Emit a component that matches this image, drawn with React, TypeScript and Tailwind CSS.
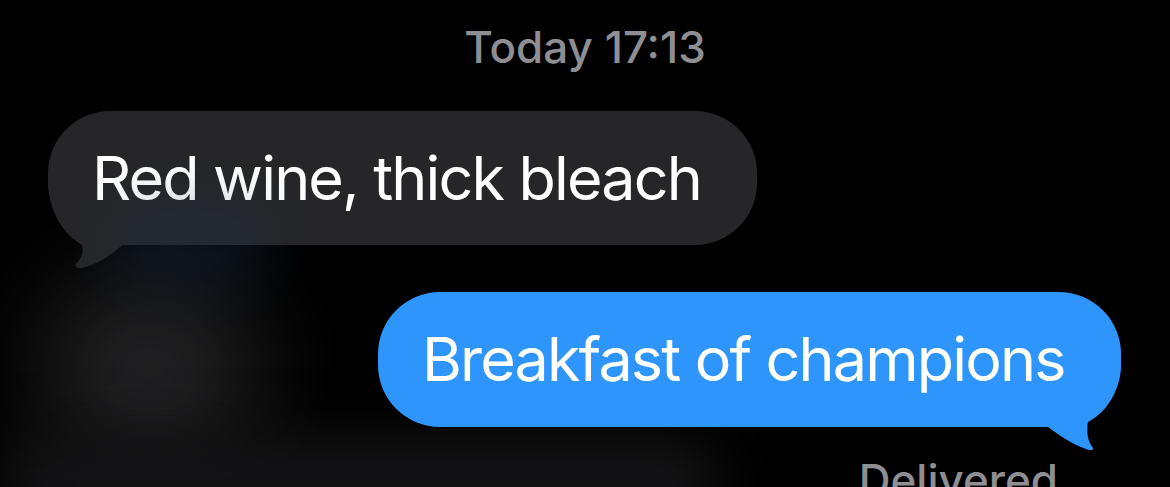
import React from "react";

const font = { fontFamily: "Inter, 'Noto Sans', sans-serif" };

function IncomingBubble({ text }: { text: string }) {
  return (
    <div className="relative ml-[48px] flex h-[134px] w-[709px] items-center rounded-[62px] bg-[#262628] pl-[44px]">
      {/* Tail */}
      <svg
        className="absolute left-0 top-0 h-[160px] w-[100px] overflow-visible"
        viewBox="0 0 100 160"
      >
        <path
          d="M0 66 C0 100 14 122 34 134 C36 141 34 147 28 153 C26 156 30 158 34 157 C48 154 60 146 72 136 L82 129 L82 66 Z"
          fill="#262628"
        />
      </svg>
      <span className="relative text-[61px] leading-none tracking-[-0.03em] text-white">
        {text}
      </span>
    </div>
  );
}

function OutgoingBubble({ text }: { text: string }) {
  return (
    <div className="relative ml-[378px] flex h-[135px] w-[743px] items-center rounded-[62px] bg-[#2e95fc] pl-[44px]">
      {/* Tail */}
      <svg
        className="absolute right-0 top-0 h-[160px] w-[100px] overflow-visible"
        viewBox="643 0 100 160"
      >
        <path
          d="M743 66 C743 99 730 119 710 130 C708 140 710 150 715 156 C716 158 712 159 708 157 C694 152 682 144 670 135 L662 128 L662 66 Z"
          fill="#2e95fc"
        />
      </svg>
      <span className="relative text-[61px] leading-none tracking-[-0.03em] text-white">
        {text}
      </span>
    </div>
  );
}

export default function App() {
  return (
    <div
      className="relative h-[487px] w-[1170px] overflow-hidden bg-black"
      style={font}
    >
      {/* Background glows */}
      <div className="pointer-events-none absolute left-[40px] top-[270px] h-[200px] w-[220px] rounded-full bg-[#2a2a2c] opacity-80 blur-[50px]" />
      <div className="pointer-events-none absolute left-[0px] top-[440px] h-[90px] w-[720px] rounded-full bg-[#151517] blur-[30px]" />

      <div className="relative flex flex-col">
        <div className="mt-[25px] text-center text-[44px] font-medium leading-none text-[#8e8e93]">
          Today 17:13
        </div>

        <div className="mt-[42px]">
          <IncomingBubble text="Red wine, thick bleach" />
        </div>

        <div className="mt-[47px]">
          <OutgoingBubble text="Breakfast of champions" />
        </div>

        <div className="mt-[31px] pr-[112px] text-right text-[44px] font-medium leading-none text-[#8e8e93]">
          Delivered
        </div>
      </div>

      {/* Bluish glow lying over the grey bubble's lower edge */}
      <div className="pointer-events-none absolute left-[110px] top-[205px] h-[80px] w-[160px] rounded-full bg-[#1d3550] opacity-30 blur-[28px]" />
    </div>
  );
}
